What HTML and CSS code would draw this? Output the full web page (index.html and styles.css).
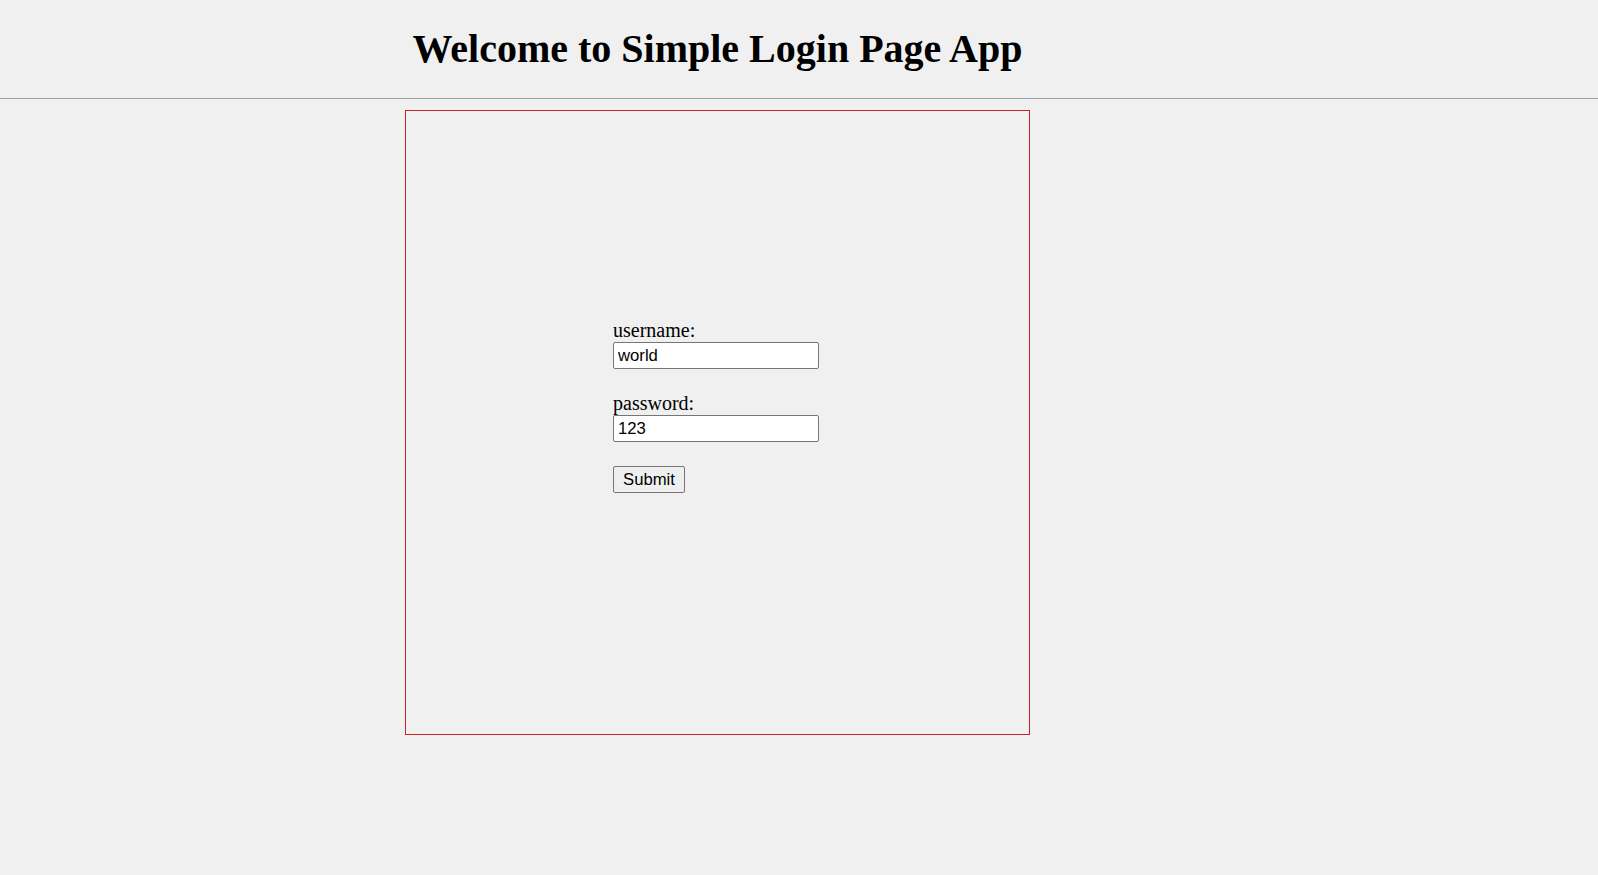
FILE: index.html
```html
<!DOCTYPE html>
<html lang="en">
<head>
<meta charset="utf-8">
<title>Simple Login Page App</title>
<link rel="stylesheet" href="styles.css">
</head>
<body>
<header class="header">
  <div class="header-inner">
    <h1 class="title">Welcome to Simple Login Page App</h1>
  </div>
</header>
<hr class="divider">
<main class="login-box">
  <form class="login-form">
    <label class="field-label" for="username">username:</label>
    <input class="field-input" id="username" type="text" value="world">
    <label class="field-label gap" for="password">password:</label>
    <input class="field-input" id="password" type="text" value="123">
    <div class="actions">
      <button class="submit-btn" type="button">Submit</button>
    </div>
  </form>
</main>
</body>
</html>
```

FILE: styles.css
```css
html, body {
  margin: 0;
  padding: 0;
  background: #f0f0f0;
}

body {
  font-family: "Liberation Serif", "Times New Roman", serif;
  color: #000;
  width: 1598px;
  height: 875px;
  overflow: hidden;
}

.header {
  padding: 26px 0 26px 0;
}

.header-inner {
  width: 625px;
  margin-left: 405px;
  text-align: center;
}

.title {
  margin: 0;
  font-size: 40px;
  line-height: 46px;
  font-weight: bold;
}

.divider {
  margin: 0;
  border: none;
  border-top: 1px solid #a0a0a0;
  height: 0;
}

.login-box {
  box-sizing: border-box;
  width: 625px;
  height: 625px;
  margin: 11px 0 0 405px;
  border: 1px solid #cd2026;
  padding: 208px 0 0 207px;
}

.login-form {
  display: flex;
  flex-direction: column;
  align-items: flex-start;
}

.field-label {
  font-size: 20px;
  line-height: 23px;
  height: 23px;
}

.field-label.gap {
  margin-top: 23px;
}

.field-input {
  box-sizing: border-box;
  width: 206px;
  height: 27px;
  margin: 0;
  padding: 1px 4px;
  border: 1px solid #767676;
  border-radius: 2px;
  background: #fff;
  font-family: "Liberation Sans", Arial, sans-serif;
  font-size: 16.7px;
  color: #000;
  outline: none;
}

.actions {
  margin-top: 24px;
}

.submit-btn {
  box-sizing: border-box;
  height: 27px;
  width: 72px;
  margin: 0;
  padding: 0;
  border: 1px solid #767676;
  border-radius: 2px;
  background: #efefef;
  font-family: "Liberation Sans", Arial, sans-serif;
  font-size: 16.7px;
  color: #000;
}
```
